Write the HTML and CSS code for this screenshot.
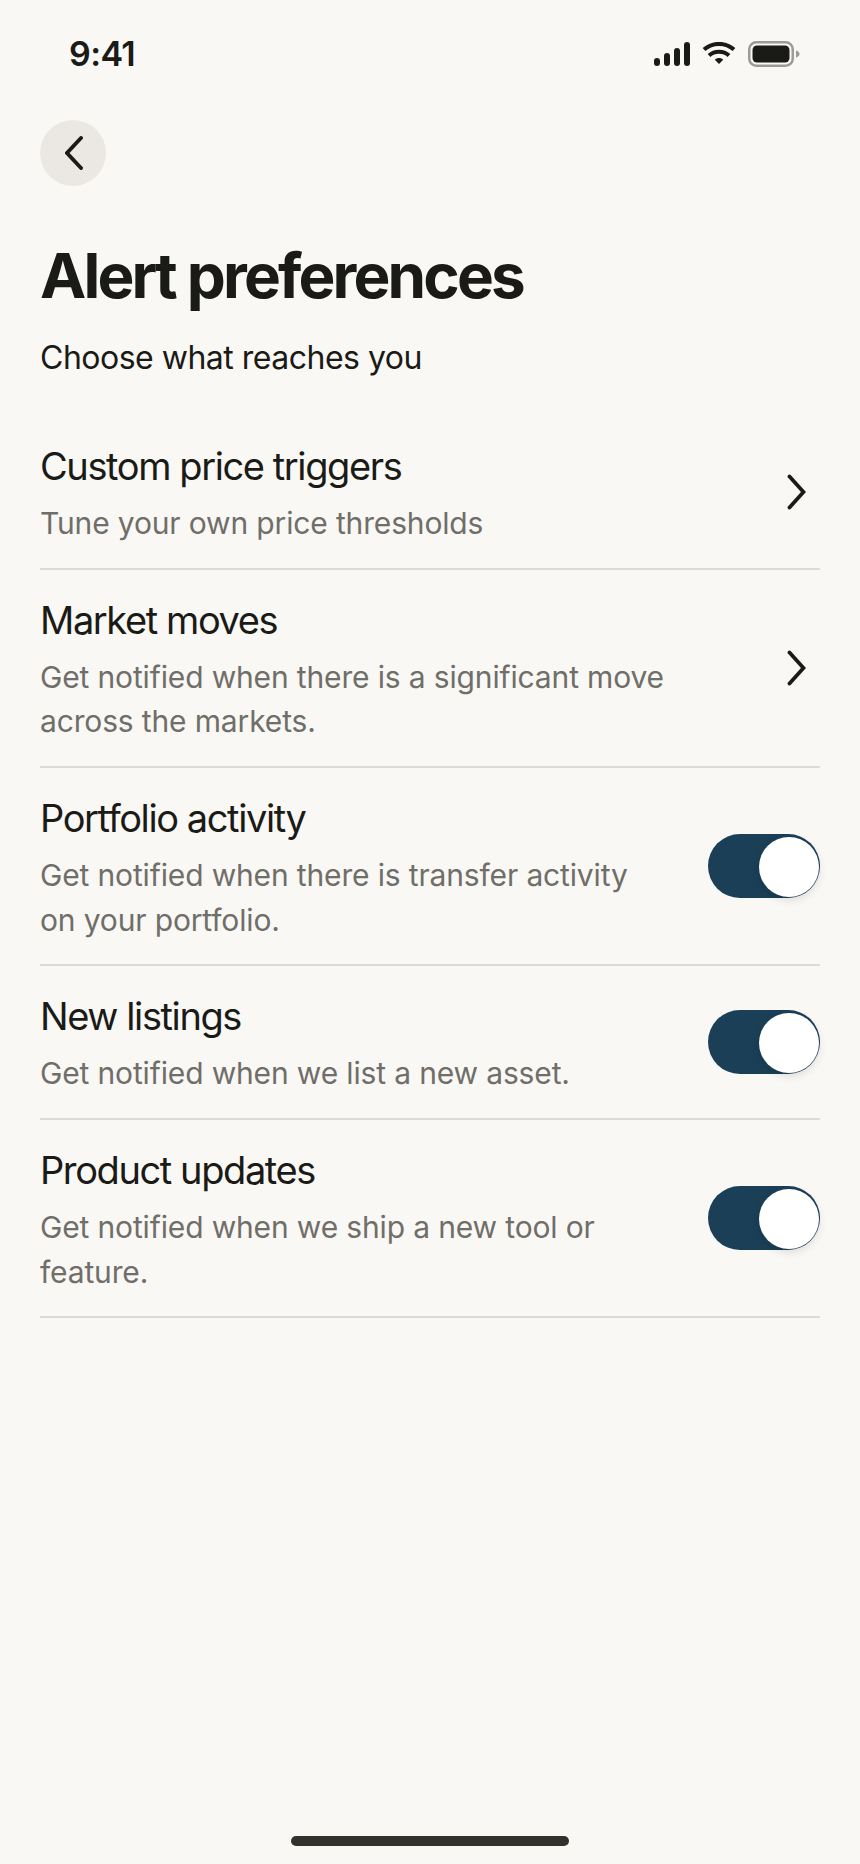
FILE: index.html
```html
<!DOCTYPE html>
<html>
  <head>
    <title>Alert preferences</title>
    <meta charset="utf-8">
    <link rel="stylesheet" href="styles.css">
  </head>
  <body>
    <div class="screen">
      <div class="status-bar">
        <span class="time">9:41</span>
        <div class="status-icons">
          <svg class="signal" width="36" height="24" viewBox="0 0 36 24">
            <rect x="0" y="16" width="6" height="8" rx="3" />
            <rect x="10" y="11" width="6" height="13" rx="3" />
            <rect x="20" y="6" width="6" height="18" rx="3" />
            <rect x="30" y="0" width="6" height="24" rx="3" />
          </svg>
          <svg class="wifi" width="34" height="24" viewBox="0 0 34 24">
            <path d="M2 7.5C10.5 0 23.5 0 32 7.5" />
            <path d="M7 13.5C12.5 8.5 21.5 8.5 27 13.5" />
            <path class="wifi-dot" d="M17 22L12.8 17.8C15 15.5 19 15.5 21.2 17.8Z" />
          </svg>
          <svg class="battery" width="52" height="26" viewBox="0 0 52 26">
            <rect x="1.25" y="1.25" width="43.5" height="23.5" rx="7" class="battery-case" />
            <rect x="4.5" y="4.5" width="37" height="17" rx="4.5" class="battery-level" />
            <path d="M48 9.5C50 10 51.5 11 51.5 13C51.5 15 50 16 48 16.5Z" class="battery-tip" />
          </svg>
        </div>
      </div>

      <button class="back" type="button">
        <svg width="18" height="34" viewBox="0 0 18 34">
          <path d="M16 2L2 17L16 32" />
        </svg>
      </button>

      <h1>Alert preferences</h1>
      <p class="lead">Choose what reaches you</p>

      <div class="list">
        <div class="row">
          <div class="row-text">
            <h2>Custom price triggers</h2>
            <p>Tune your own price thresholds</p>
          </div>
          <svg class="chevron" width="20" height="36" viewBox="0 0 20 36">
            <path d="M3.5 2.5L17.5 18L3.5 33.5" />
          </svg>
        </div>
        <div class="row">
          <div class="row-text">
            <h2>Market moves</h2>
            <p>Get notified when there is a significant move across the markets.</p>
          </div>
          <svg class="chevron" width="20" height="36" viewBox="0 0 20 36">
            <path d="M3.5 2.5L17.5 18L3.5 33.5" />
          </svg>
        </div>
        <div class="row">
          <div class="row-text">
            <h2>Portfolio activity</h2>
            <p>Get notified when there is transfer activity on your portfolio.</p>
          </div>
          <div class="toggle"><span class="knob"></span></div>
        </div>
        <div class="row">
          <div class="row-text">
            <h2>New listings</h2>
            <p>Get notified when we list a new asset.</p>
          </div>
          <div class="toggle"><span class="knob"></span></div>
        </div>
        <div class="row">
          <div class="row-text">
            <h2>Product updates</h2>
            <p>Get notified when we ship a new tool or feature.</p>
          </div>
          <div class="toggle"><span class="knob"></span></div>
        </div>
      </div>

      <div class="home-bar"></div>
    </div>
  </body>
</html>
```

FILE: styles.css
```css
* {
  box-sizing: border-box;
}
html, body {
  margin: 0;
  padding: 0;
}
body {
  background-color: #faf8f5;
  color: #1a1a17;
  font-family: Inter, "Liberation Sans", sans-serif;
}
.screen {
  display: flex;
  flex-direction: column;
  height: 1864px;
  padding: 0 40px;
}
.status-bar {
  display: flex;
  align-items: center;
  justify-content: space-between;
  height: 108px;
  padding: 0 20px 0 29px;
}
.time {
  font-size: 34px;
  font-weight: 600;
  line-height: 40px;
  letter-spacing: -0.6px;
}
.status-icons {
  display: flex;
  align-items: center;
  gap: 12px;
}
.signal {
  fill: #1a1a17;
}
.wifi path {
  fill: none;
  stroke: #1a1a17;
  stroke-width: 4px;
}
.wifi .wifi-dot {
  fill: #1a1a17;
  stroke: none;
}
.battery-case {
  fill: none;
  stroke: #9c9b97;
  stroke-width: 2.5px;
}
.battery-level {
  fill: #1a1a17;
}
.battery-tip {
  fill: #9c9b97;
}
.back {
  display: flex;
  align-items: center;
  justify-content: center;
  flex: none;
  width: 66px;
  height: 66px;
  margin-top: 12px;
  padding: 0 0 0 1px;
  border: 0;
  border-radius: 50%;
  background-color: #ebe8e4;
}
.back path, .chevron path {
  fill: none;
  stroke: #1a1a17;
  stroke-width: 3.8px;
  stroke-linecap: round;
  stroke-linejoin: miter;
}
h1 {
  margin: 57px 0 0;
  font-size: 62px;
  font-weight: 700;
  line-height: 66px;
  letter-spacing: -2.85px;
}
.lead {
  margin: 27px 0 0;
  font-size: 32px;
  line-height: 44px;
  letter-spacing: -0.5px;
}
.list {
  margin-top: 36px;
}
.row {
  display: flex;
  align-items: center;
  justify-content: space-between;
  border-bottom: 2px solid #dcdbd6;
}
.row-text {
  width: 628px;
  padding: 27px 0 22.3px;
}
.row h2 {
  margin: 0;
  font-size: 38px;
  font-weight: 400;
  line-height: 46px;
  letter-spacing: -1.4px;
}
.row p {
  margin: 12px 0 0;
  color: #6f6e69;
  font-size: 30px;
  line-height: 44.5px;
  letter-spacing: -0.15px;
}
.chevron {
  margin-right: 14px;
}
.toggle {
  display: flex;
  align-items: center;
  justify-content: flex-end;
  flex: none;
  width: 112px;
  height: 64px;
  padding-right: 1px;
  border-radius: 32px;
  background-color: #1b3f57;
}
.knob {
  width: 60px;
  height: 60px;
  margin-top: 1px;
  border-radius: 50%;
  background-color: #fff;
  box-shadow: 0 3px 8px rgba(0, 0, 0, 0.12);
}
.home-bar {
  width: 278px;
  height: 10px;
  margin: auto auto 18px;
  border-radius: 5px;
  background-color: #33312c;
}
```
